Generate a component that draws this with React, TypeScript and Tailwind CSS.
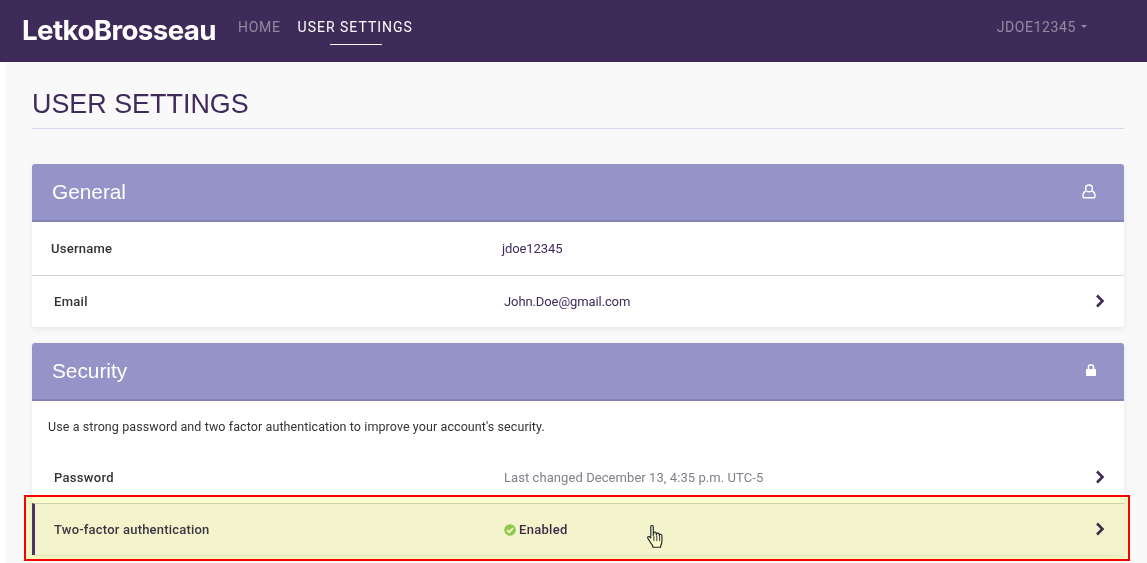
import React from "react";

const Chevron = () => (
  <svg width="10" height="14" viewBox="0 0 10 14" className="text-[#3f2b5a] -mt-[2px]" fill="none" stroke="currentColor" strokeWidth="2.6">
    <path d="M2 1.5 L7.5 7 L2 12.5" />
  </svg>
);

const UserIcon = () => (
  <svg width="14" height="15" viewBox="0 0 14 15" fill="none" stroke="white" strokeWidth="1.4" className="-mt-[1px]">
    <circle cx="7" cy="4.4" r="3.4" />
    <path d="M3.8 7 C1.8 8 1 9.6 1 11.6 V12.4 A1.4 1.4 0 0 0 2.4 13.8 H11.6 A1.4 1.4 0 0 0 13 12.4 V11.6 C13 9.6 12.2 8 10.2 7" />
  </svg>
);

const LockIcon = () => (
  <svg width="10" height="12" viewBox="0 0 10 12" fill="white" className="-mt-[2px]">
    <path d="M1.7 5.2V3.4a3.3 3.3 0 0 1 6.6 0v1.8H6.8V3.4a1.8 1.8 0 0 0-3.6 0v1.8z" />
    <rect x="0" y="5" width="10" height="7" rx="0.8" />
  </svg>
);

const Check = () => (
  <svg width="12" height="12" viewBox="0 0 12 12">
    <circle cx="6" cy="6" r="5.8" fill="#8cc860" />
    <path d="M3 6.2 L5.2 8.3 L9 4.2" stroke="white" strokeWidth="1.8" fill="none" />
  </svg>
);

const Hand = () => (
  <svg width="23" height="27" viewBox="0 0 20 26" className="absolute left-[645px] top-[524px]">
    <path d="M4.5 2.6c0-1.6 2.4-1.6 2.4 0V11l.4-2.4c.3-1.3 2.3-1.1 2.4.3l.1 1.6.4-1c.4-1.2 2.3-.9 2.4.4l.1 1.2.3-.5c.6-1 2.2-.6 2.2.6v5.5c0 2-.5 3-1.2 4.3v1.4H6.5v-1.4c-1.2-1.5-2.2-3-3.6-5.2-.8-1.3-1.9-2.3-1.4-3.2.5-.9 1.8-.5 2.9.7l.1.1z" fill="white" stroke="#1f2540" strokeWidth="1.1" strokeLinejoin="round" />
    <path d="M7.5 11.5v5M10.3 11v5.5M13 11.5v5" stroke="#1f2540" strokeWidth="0.9" />
  </svg>
);

function Header({ title, icon }: { title: string; icon: React.ReactNode }) {
  return (
    <div className="h-[58px] bg-[#9494c8] border-b-2 border-[#8484b4] rounded-t-[3px] flex items-center justify-between pl-5 pr-[28px]">
      <span className="text-[20.8px] text-white font-['Liberation_Sans',sans-serif]">{title}</span>
      {icon}
    </div>
  );
}

export default function App() {
  return (
    <div className="relative w-[1147px] h-[563px] overflow-hidden bg-white font-['Roboto',sans-serif]">
      <nav className="h-[62px] bg-[#3f2b5a] flex items-center">
        <span className="ml-[22px] w-[216px] text-[27.7px] font-bold text-white tracking-[-0.6px] font-['Inter',sans-serif] leading-none">LetkoBrosseau</span>
        <span className="text-[14px] tracking-[0.7px] text-[#96899f] -mt-[8px]">HOME</span>
        <div className="relative ml-[17px] -mt-[8px]">
          <span className="text-[14px] tracking-[1px] text-white">USER SETTINGS</span>
          <div className="absolute left-[32px] top-[29px] w-[52px] h-px bg-white" />
        </div>
        <div className="ml-auto mr-[60px] flex items-center gap-[5px] -mt-[8px] text-[14px] tracking-[0.6px] text-[#96899f]">
          <span>JDOE12345</span>
          <span className="w-0 h-0 border-x-[3px] border-x-transparent border-t-[3px] border-t-[#96899f] mb-[1px]" />
        </div>
      </nav>
      <main className="ml-[6px] h-[501px] bg-[#f9f9f9] pl-[26px] pr-[23px]">
        <h1 className="pt-[26px] h-[67px] border-b border-[#d6d6ef] text-[26.9px] leading-[33px] text-[#3f2b5a] font-['Liberation_Sans',sans-serif]">USER SETTINGS</h1>

        <section className="mt-[35px] bg-white rounded-[3px] shadow-[0_2px_6px_rgba(0,0,0,0.08)]">
          <Header title="General" icon={<UserIcon />} />
          <div className="h-[54px] flex items-center border-b border-[#d4d4d4] text-[13px] text-[#333]">
            <span className="ml-[19px] w-[451px] font-medium tracking-[0.25px]">Username</span>
            <span className="text-[#3f2b5a] tracking-[-0.1px]">jdoe12345</span>
          </div>
          <div className="h-[51px] flex items-center text-[13px] text-[#333] pr-[19px]">
            <span className="ml-[22px] w-[450px] font-medium tracking-[0.3px]">Email</span>
            <span className="text-[#3f2b5a] tracking-[-0.1px]">John.Doe@gmail.com</span>
            <span className="ml-auto"><Chevron /></span>
          </div>
        </section>

        <section className="mt-[16px] bg-white rounded-[3px] shadow-[0_2px_6px_rgba(0,0,0,0.08)]">
          <Header title="Security" icon={<LockIcon />} />
          <p className="pt-[17px] pl-4 h-[51px] text-[12.5px] tracking-[0.09px] text-[#333]">Use a strong password and two factor authentication to improve your account's security.</p>
          <div className="h-[51px] flex items-center text-[13px] pr-[19px]">
            <span className="ml-[22px] w-[450px] font-medium tracking-[0.3px] text-[#333]">Password</span>
            <span className="text-[#80808a] tracking-[0.07px]">Last changed December 13, 4:35 p.m. UTC-5</span>
            <span className="ml-auto"><Chevron /></span>
          </div>
          <div className="h-[52px] flex items-center text-[13px] pr-[19px] bg-[#f4f4ff] border-t border-[#cfcfd8] border-l-[3px] border-l-[#4c357f]">
            <span className="ml-[19px] w-[450px] font-medium tracking-[0.2px] text-[#3a3550]">Two-factor authentication</span>
            <span className="flex items-center gap-[3px] font-medium tracking-[0.3px] text-[#3f2b5a]"><Check />Enabled</span>
            <span className="ml-auto"><Chevron /></span>
          </div>
        </section>
      </main>
      <Hand />
      <div className="absolute left-[24px] top-[495px] w-[1106px] h-[66px] border-2 border-[#f00] bg-[#ffffcc] mix-blend-multiply" />
    </div>
  );
}
